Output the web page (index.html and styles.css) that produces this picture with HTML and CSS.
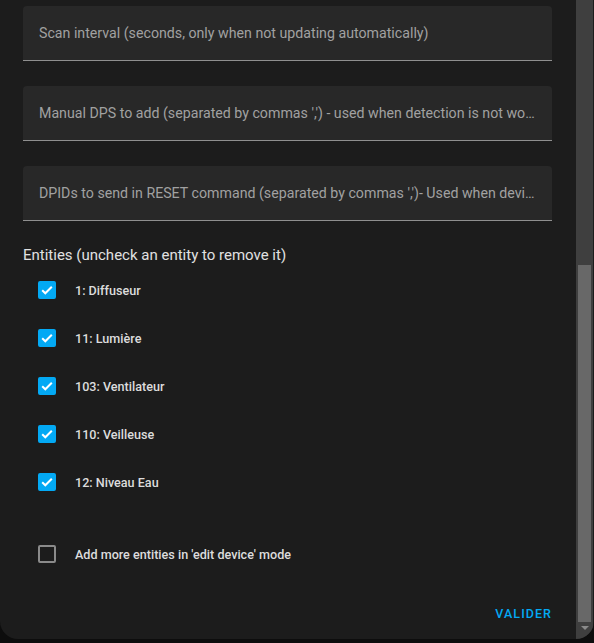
FILE: index.html
```html
<!DOCTYPE html>
<html>
<head>
  <meta charset="UTF-8">
  <title>Options</title>
  <link rel="stylesheet" href="styles.css">
</head>
<body>
  <div class="dialog">
    <div class="content">
      <div class="field">Scan interval (seconds, only when not updating automatically)</div>
      <div class="field">Manual DPS to add (separated by commas ',') - used when detection is not working (optional)</div>
      <div class="field">DPIDs to send in RESET command (separated by commas ',')- Used when device does not respond to status requests after turning on (optional)</div>

      <h2 class="heading">Entities (uncheck an entity to remove it)</h2>

      <div class="entities">
        <label class="row"><span class="box checked"><svg viewBox="0 0 18 18"><path d="M4.2 9.2l3.1 3.1 6.5-6.6" /></svg></span>1: Diffuseur</label>
        <label class="row"><span class="box checked"><svg viewBox="0 0 18 18"><path d="M4.2 9.2l3.1 3.1 6.5-6.6" /></svg></span>11: Lumière</label>
        <label class="row"><span class="box checked"><svg viewBox="0 0 18 18"><path d="M4.2 9.2l3.1 3.1 6.5-6.6" /></svg></span>103: Ventilateur</label>
        <label class="row"><span class="box checked"><svg viewBox="0 0 18 18"><path d="M4.2 9.2l3.1 3.1 6.5-6.6" /></svg></span>110: Veilleuse</label>
        <label class="row"><span class="box checked"><svg viewBox="0 0 18 18"><path d="M4.2 9.2l3.1 3.1 6.5-6.6" /></svg></span>12: Niveau Eau</label>
      </div>

      <label class="row extra"><span class="box"></span>Add more entities in 'edit device' mode</label>

      <div class="actions">
        <button class="submit">Valider</button>
      </div>
    </div>

    <div class="scrollbar">
      <div class="thumb"></div>
      <div class="arrow"></div>
    </div>
  </div>
</body>
</html>
```

FILE: styles.css
```css
/* dark options dialog */
body {
  margin: 0;
  background-color: #0d0d0d;
  font-family: Roboto, "Liberation Sans", sans-serif;
}

.dialog {
  display: flex;
  width: 594px;
  height: 639px;
  background-color: #1c1c1c;
  border-radius: 0 0 18px 18px;
  overflow: hidden;
}

.content {
  flex: 1;
  min-width: 0;
  padding: 6px 24px 0 23px;
}

.field {
  height: 54px;
  line-height: 54px;
  padding: 0 16px;
  margin-bottom: 25px;
  background-color: #282828;
  border-radius: 4px 4px 0 0;
  border-bottom: 1px solid #8f8f8f;
  color: #a1a1a1;
  font-size: 14.2px;
  white-space: nowrap;
  overflow: hidden;
  text-overflow: ellipsis;
}

.field:last-of-type {
  margin-bottom: 0;
}

.heading {
  margin: 24px 0 2px;
  font-size: 15px;
  font-weight: 400;
  color: #e1e1e1;
}

.row {
  display: flex;
  align-items: center;
  height: 48px;
  padding-left: 15px;
  font-size: 12.6px;
  font-weight: 500;
  color: #dcdcdc;
}

.box {
  flex: none;
  width: 18px;
  height: 18px;
  box-sizing: border-box;
  margin-right: 19px;
  border: 2px solid #8a8a8a;
  border-radius: 2px;
}

.box.checked {
  background-color: #03a9f4;
  border-color: #03a9f4;
}

.box svg {
  display: block;
  width: 18px;
  height: 18px;
  margin: -2px;
}

.box path {
  fill: none;
  stroke: #fff;
  stroke-width: 2;
}

.extra {
  margin-top: 24px;
}

.actions {
  display: flex;
  justify-content: flex-end;
  margin-top: 28px;
}

.submit {
  padding: 0;
  background: none;
  border: none;
  color: #03a9f4;
  font-family: Roboto, "Liberation Sans", sans-serif;
  font-size: 12.5px;
  font-weight: 500;
  letter-spacing: 1.05px;
  text-transform: uppercase;
  cursor: pointer;
}

.scrollbar {
  flex: none;
  display: flex;
  flex-direction: column;
  align-items: center;
  width: 17px;
  margin-right: 1px;
  padding-top: 265px;
  background-color: #3f3f3f;
}

.thumb {
  width: 13px;
  height: 357px;
  background-color: #686868;
}

.arrow {
  margin-top: 4px;
  border-left: 4px solid transparent;
  border-right: 4px solid transparent;
  border-top: 4px solid #8a8a8a;
}
```
